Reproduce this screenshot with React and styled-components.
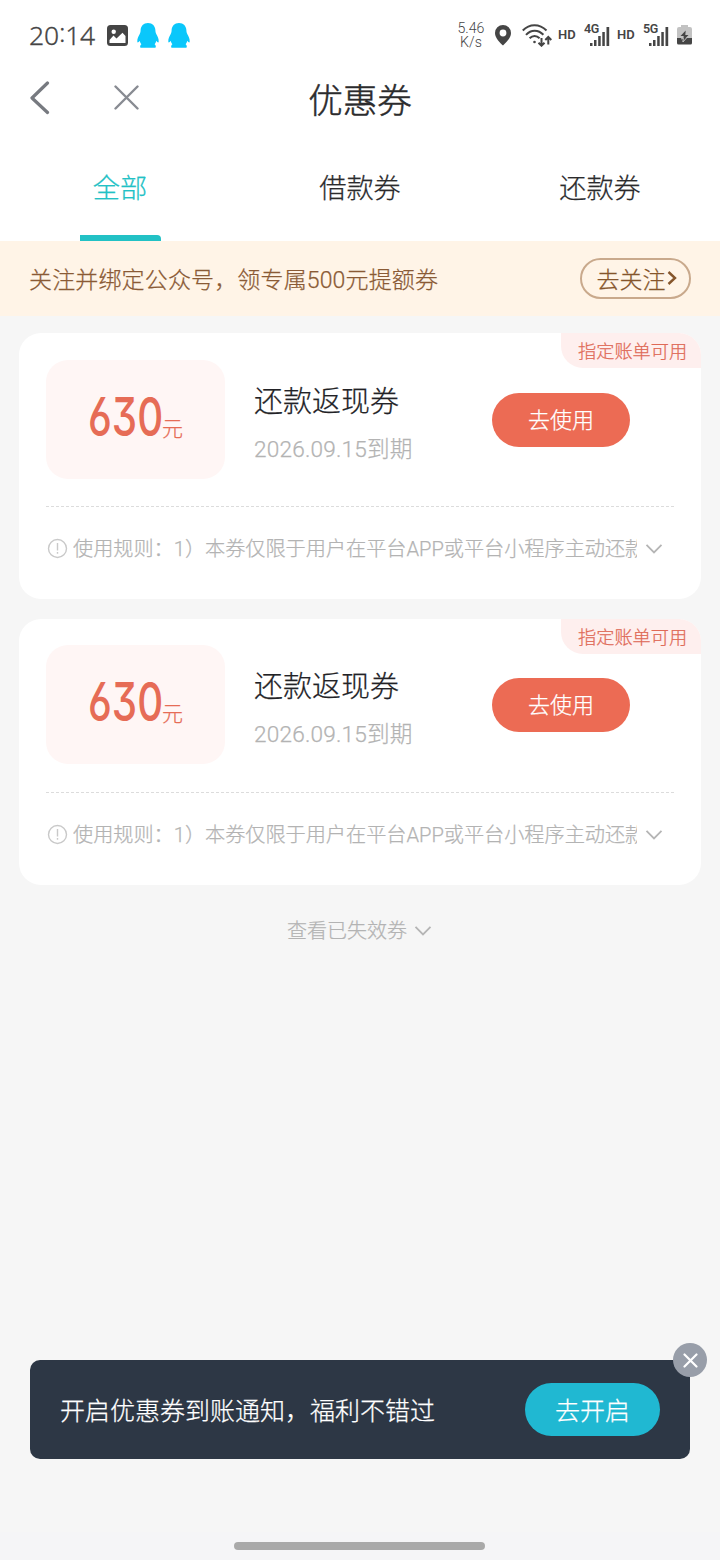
import React from 'react'
import styled, { createGlobalStyle } from 'styled-components'

const GlobalStyle = createGlobalStyle`
  * {
    box-sizing: border-box;
  }
  body {
    margin: 0;
    background: #f6f6f6;
    font-family: Roboto, 'Noto Sans CJK SC', sans-serif;
    font-weight: 300;
    -webkit-text-stroke: 0.25px currentColor;
  }
  button {
    border: none;
    padding: 0;
    background: transparent;
    font-family: inherit;
    font-weight: inherit;
  }
  svg {
    display: block;
    flex-shrink: 0;
  }
`

const Page = styled.div`
  display: flex;
  flex-direction: column;
  width: 720px;
  height: 1560px;
  overflow: hidden;
`

const StatusBar = styled.div`
  display: flex;
  align-items: center;
  height: 70px;
  padding: 0 28px 0 29px;
  background: #fff;
  color: #454545;
  -webkit-text-stroke: 0;
`

const Clock = styled.span`
  width: 78px;
  font-family: 'Noto Sans', sans-serif;
  font-size: 26.5px;
  line-height: 36px;
  letter-spacing: -0.2px;
  -webkit-text-stroke: 0.3px currentColor;

  i {
    position: relative;
    top: -3px;
    font-style: normal;
  }
`

const Notices = styled.div`
  display: flex;
  align-items: center;
  gap: 9px;
`

const Indicators = styled.div`
  display: flex;
  align-items: center;
  margin-left: auto;
`

const Speed = styled.div`
  width: 28px;
  margin-right: 10px;
  font-size: 14.2px;
  line-height: 14px;
  text-align: center;
  white-space: nowrap;
`

const Wifi = styled.div`
  margin-left: 11px;
`

const Battery = styled.div`
  margin-left: 7px;
`

const Hd = styled.span`
  width: 18px;
  margin-left: 6px;
  margin-right: 8px;
  font-size: 13px;
  font-weight: 600;
  line-height: 14px;
`

const SignalBox = styled.div`
  display: flex;
  width: 27px;
  height: 24px;
`

const Network = styled.span`
  width: 5px;
  font-size: 12.5px;
  font-weight: 600;
  line-height: 12px;
  letter-spacing: -0.4px;
`

const NavBar = styled.header`
  display: grid;
  grid-template-columns: 1fr auto 1fr;
  align-items: center;
  height: 70px;
  padding: 0 28px;
  background: #fff;
`

const NavButtons = styled.div`
  display: flex;
  align-items: center;
  gap: 62px;
  padding-bottom: 15px;
`

const Title = styled.h1`
  margin: 0;
  padding-bottom: 9px;
  color: #2b2b2d;
  font-size: 34.6px;
  font-weight: 300;
  line-height: 50px;
  -webkit-text-stroke: 0.5px currentColor;
`

const Tabs = styled.nav`
  display: flex;
  height: 101px;
  background: #fff;
`

const Tab = styled.button`
  display: flex;
  flex: 1;
  flex-direction: column;
  align-items: center;
  justify-content: space-between;
  padding-top: 29px;
  color: ${({ $active }) => ($active ? '#22c1c5' : '#2b2b2d')};
  font-size: 27.2px;
  line-height: 40px;

  &::after {
    content: '';
    width: 81px;
    height: 6px;
    border-radius: 0 4px 0 0;
    background: ${({ $active }) => ($active ? '#22c1c5' : 'transparent')};
  }
`

const Banner = styled.div`
  display: flex;
  align-items: center;
  justify-content: space-between;
  height: 75px;
  padding: 0 29px 1px;
  background: #fff4e7;
  color: #8a5a35;
  font-size: 23px;
  letter-spacing: 0.15px;
`

const FollowButton = styled.button`
  display: flex;
  align-items: center;
  justify-content: center;
  gap: 1px;
  width: 111px;
  height: 41px;
  padding: 0 0 1px 2px;
  border: 2px solid #c9a98c;
  border-radius: 21px;
  color: #85552b;
  font-size: 23px;
`

const Coupons = styled.main`
  display: flex;
  flex-direction: column;
  gap: 19.6px;
  padding: 17px 19px 0;
`

const Card = styled.section`
  position: relative;
  height: 266px;
  padding: 26.7px 27px 0;
  border-radius: 22px;
  background: #fff;
`

const Tag = styled.span`
  position: absolute;
  top: 0;
  right: 0;
  width: 140px;
  height: 35px;
  padding-left: 17px;
  border-radius: 0 22px 0 22px;
  background: #feefee;
  color: #df6a57;
  font-size: 18.2px;
  line-height: 37px;
  white-space: nowrap;
`

const CouponTop = styled.div`
  display: flex;
  height: 147.3px;
  border-bottom: 1px dashed #dcdcdc;
`

const Amount = styled.div`
  display: flex;
  align-items: baseline;
  width: 179px;
  height: 119px;
  padding-left: 42px;
  border-radius: 22px;
  background: #fff6f5;
  color: #e66c56;
  line-height: 113px;
`

const Digits = styled.span`
  width: 74px;
  font-family: Inter, Roboto, sans-serif;
  font-size: 54px;
  font-weight: 500;
  font-feature-settings: 'cv03', 'cv09';
  -webkit-text-stroke: 0;
  transform: scaleX(0.745);
  transform-origin: left;
`

const Unit = styled.span`
  font-size: 21px;
`

const Info = styled.div`
  width: 238px;
  padding: 22px 0 0 29px;
`

const Name = styled.div`
  color: #222226;
  font-size: 29px;
  line-height: 40px;
`

const Expiry = styled.div`
  margin-top: 9px;
  color: #b3b3b3;
  font-size: 22.6px;
  line-height: 38px;
  letter-spacing: 0.2px;
`

const UseButton = styled.button`
  width: 138px;
  height: 54px;
  margin: 33px 0 0 29px;
  padding-bottom: 4px;
  border-radius: 27px;
  background: #ec6b54;
  color: #fff;
  font-size: 22px;
`

const Rules = styled.div`
  display: flex;
  align-items: center;
  height: 84px;
  padding-left: 1px;
  color: #b3b3b3;
`

const RulesText = styled.span`
  width: 564px;
  margin: 0 8px 0 5px;
  overflow: hidden;
  font-size: 20.15px;
  line-height: 30px;
  white-space: nowrap;
`

const ExpiredLink = styled.button`
  display: flex;
  align-items: center;
  align-self: center;
  gap: 7px;
  margin: 30px 1px 0 0;
  color: #b3b3b3;
  font-size: 20px;
  line-height: 32px;
`

const Toast = styled.aside`
  position: relative;
  display: flex;
  align-items: center;
  justify-content: space-between;
  height: 99px;
  margin: auto 30px 73px;
  padding: 0 30px;
  border-radius: 10px;
  background: #2d3745;
  color: #fff;
  font-size: 25px;
`

const ToastText = styled.span`
  padding-bottom: 2px;
`

const OpenButton = styled.button`
  width: 135px;
  height: 53px;
  padding-bottom: 2px;
  border-radius: 27px;
  background: #20b8d2;
  color: #fff;
  font-size: 25px;
`

const CloseBadge = styled.button`
  position: absolute;
  top: -17px;
  right: -17px;
  display: flex;
  align-items: center;
  justify-content: center;
  width: 34px;
  height: 34px;
  border-radius: 50%;
  background: #989ea9;
`

const HomeArea = styled.footer`
  display: flex;
  justify-content: center;
  height: 28px;
  padding: 10px 2px 0 0;
  background: #f5f5f7;
`

const HomeBar = styled.div`
  width: 251px;
  height: 8px;
  border-radius: 4px;
  background: #a9a9a9;
`

const PictureIcon = () => (
  <svg width="21" height="21" viewBox="0 0 21 21">
    <rect width="21" height="21" rx="3.5" fill="#454545" />
    <circle cx="6.700" cy="6.800" r="2.200" fill="#fff" />
    <path d="M2.500 18v-3l4-4.500 3 3 6-5.700 3 3.200v7z" fill="#fff" />
  </svg>
)

const PenguinIcon = () => (
  <svg width="22" height="25" viewBox="0 0 22 25">
    <path
      d="M11 0C6.500 0 3.700 3.200 3.600 7.300c0 1.500-.3 2.500-1 4C1.300 13.800.2 16 .3 18.500c.1 1.600 1.200 1 2.400-.8.3 1.500 1 2.700 1.700 3.500-1.500.8-1.700 3.600-.2 3.600h13.600c1.500 0 1.300-2.800-.2-3.600.8-.8 1.400-2 1.700-3.500 1.200 1.800 2.300 2.400 2.400.8.1-2.500-1-4.700-2.300-7.200-.7-1.500-1-2.500-1-4C18.300 3.200 15.500 0 11 0z"
      fill="#0ac7fb"
    />
  </svg>
)

const PinIcon = () => (
  <svg width="16" height="21" viewBox="0 0 16 21">
    <path
      fillRule="evenodd"
      d="M8 0a8 8 0 0 0-8 8c0 5.300 5.200 9.800 8 12.500C10.800 17.800 16 13.300 16 8a8 8 0 0 0-8-8zm0 4.600a3.400 3.400 0 1 1 0 6.800 3.400 3.400 0 0 1 0-6.800z"
      fill="#454545"
    />
  </svg>
)

const WifiIcon = () => (
  <svg width="30" height="23" viewBox="0 0 30 23" fill="none" stroke="#454545" strokeWidth="2">
    <path d="M.8 6.500C7.500-.6 17.500-.6 24.500 6.500" />
    <path d="M4 10.800c5-5.500 12.300-5.500 17.400 0" />
    <path d="M7.600 14.300c3-3.200 7-3.200 10 0" />
    <circle cx="12.500" cy="18" r="1.300" fill="#454545" stroke="none" />
    <path d="M19.500 14v7.500M16.500 18.700l3 3 3-3M26.300 20.500v-7.300M23.300 16l3-3 3 3" />
  </svg>
)

const Signal = ({ label }) => (
  <SignalBox>
    <Network>{label}</Network>
    <svg width="21" height="24" viewBox="0 0 21 24" fill="#454545">
      <rect x="1" y="20" width="2.500" height="3" />
      <rect x="5" y="17" width="2.500" height="6" />
      <rect x="9.200" y="13" width="2.500" height="10" />
      <rect x="13.300" y="9" width="2.500" height="14" />
      <rect x="17.500" y="4" width="2.700" height="19" />
    </svg>
  </SignalBox>
)

const BatteryIcon = () => (
  <svg width="15" height="20" viewBox="0 0 15 20">
    <path d="M4 0h7v2h2a2 2 0 0 1 2 2v9H0V4a2 2 0 0 1 2-2h2z" fill="#c2c2c2" />
    <path d="M0 13h15v5a1.500 1.500 0 0 1-1.500 1.500h-12A1.500 1.500 0 0 1 0 18z" fill="#454545" />
    <path d="M8.700 5.500L3.500 11h3.200l-.6 4.800L11.500 10H8.300z" fill="#454545" />
    <path d="M4 14l2.300-1-.4 4L9.500 13" fill="none" stroke="#c2c2c2" strokeWidth="1" />
  </svg>
)

const BackIcon = () => (
  <svg width="24" height="34" viewBox="0 0 24 34" fill="none" stroke="#777a80" strokeWidth="3.200">
    <path d="M19.500 2L4 17 19.500 31.500" strokeLinecap="round" strokeLinejoin="round" />
  </svg>
)

const Cross = ({ size, color, width }) => (
  <svg width={size} height={size} viewBox={`0 0 ${size} ${size}`}>
    <path
      d={`M1.500 1.500L${size - 1.5} ${size - 1.5}M${size - 1.5} 1.500L1.500 ${size - 1.5}`}
      stroke={color}
      strokeWidth={width}
      strokeLinecap="round"
    />
  </svg>
)

const ChevronDown = () => (
  <svg width="18" height="12" viewBox="0 0 18 12" fill="none" stroke="#b5b5b5" strokeWidth="1.800">
    <path d="M1.500 1.800L9 9.500l7.500-7.700" />
  </svg>
)

const ChevronRight = () => (
  <svg width="10" height="16" viewBox="0 0 10 16" fill="none" stroke="#85552b" strokeWidth="2.400">
    <path d="M1.500 2l6.500 6-6.500 6" />
  </svg>
)

const NoticeIcon = () => (
  <svg width="21" height="21" viewBox="0 0 21 21" fill="none" stroke="#c9c9c9" strokeWidth="1.400">
    <circle cx="10.500" cy="10.500" r="9" />
    <path d="M10.500 5v7.500M10.500 14v1.800" />
  </svg>
)

const tabs = ['全部', '借款券', '还款券']

const coupons = [
  { id: 1, amount: 630, name: '还款返现券', expiry: '2026.09.15到期' },
  { id: 2, amount: 630, name: '还款返现券', expiry: '2026.09.15到期' },
]

const Coupon = ({ amount, name, expiry }) => (
  <Card>
    <Tag>指定账单可用</Tag>
    <CouponTop>
      <Amount>
        <Digits>{amount}</Digits>
        <Unit>元</Unit>
      </Amount>
      <Info>
        <Name>{name}</Name>
        <Expiry>{expiry}</Expiry>
      </Info>
      <UseButton>去使用</UseButton>
    </CouponTop>
    <Rules>
      <NoticeIcon />
      <RulesText>使用规则：1）本券仅限于用户在平台APP或平台小程序主动还款</RulesText>
      <ChevronDown />
    </Rules>
  </Card>
)

const App = () => {
  return (
    <Page>
      <GlobalStyle />
      <StatusBar>
        <Clock>
          20<i>:</i>14
        </Clock>
        <Notices>
          <PictureIcon />
          <PenguinIcon />
          <PenguinIcon />
        </Notices>
        <Indicators>
          <Speed>
            5.46
            <br />
            K/s
          </Speed>
          <PinIcon />
          <Wifi>
            <WifiIcon />
          </Wifi>
          <Hd>HD</Hd>
          <Signal label="4G" />
          <Hd>HD</Hd>
          <Signal label="5G" />
          <Battery>
            <BatteryIcon />
          </Battery>
        </Indicators>
      </StatusBar>
      <NavBar>
        <NavButtons>
          <BackIcon />
          <Cross size={25} color="#888b92" width={2.4} />
        </NavButtons>
        <Title>优惠券</Title>
      </NavBar>
      <Tabs>
        {tabs.map((tab, i) => (
          <Tab key={tab} $active={i === 0}>
            {tab}
          </Tab>
        ))}
      </Tabs>
      <Banner>
        关注并绑定公众号，领专属500元提额券
        <FollowButton>
          去关注
          <ChevronRight />
        </FollowButton>
      </Banner>
      <Coupons>
        {coupons.map(({ id, ...coupon }) => (
          <Coupon key={id} {...coupon} />
        ))}
      </Coupons>
      <ExpiredLink>
        查看已失效券
        <ChevronDown />
      </ExpiredLink>
      <Toast>
        <ToastText>开启优惠券到账通知，福利不错过</ToastText>
        <OpenButton>去开启</OpenButton>
        <CloseBadge>
          <Cross size={15} color="#fff" width={2.2} />
        </CloseBadge>
      </Toast>
      <HomeArea>
        <HomeBar />
      </HomeArea>
    </Page>
  )
}

export default App
